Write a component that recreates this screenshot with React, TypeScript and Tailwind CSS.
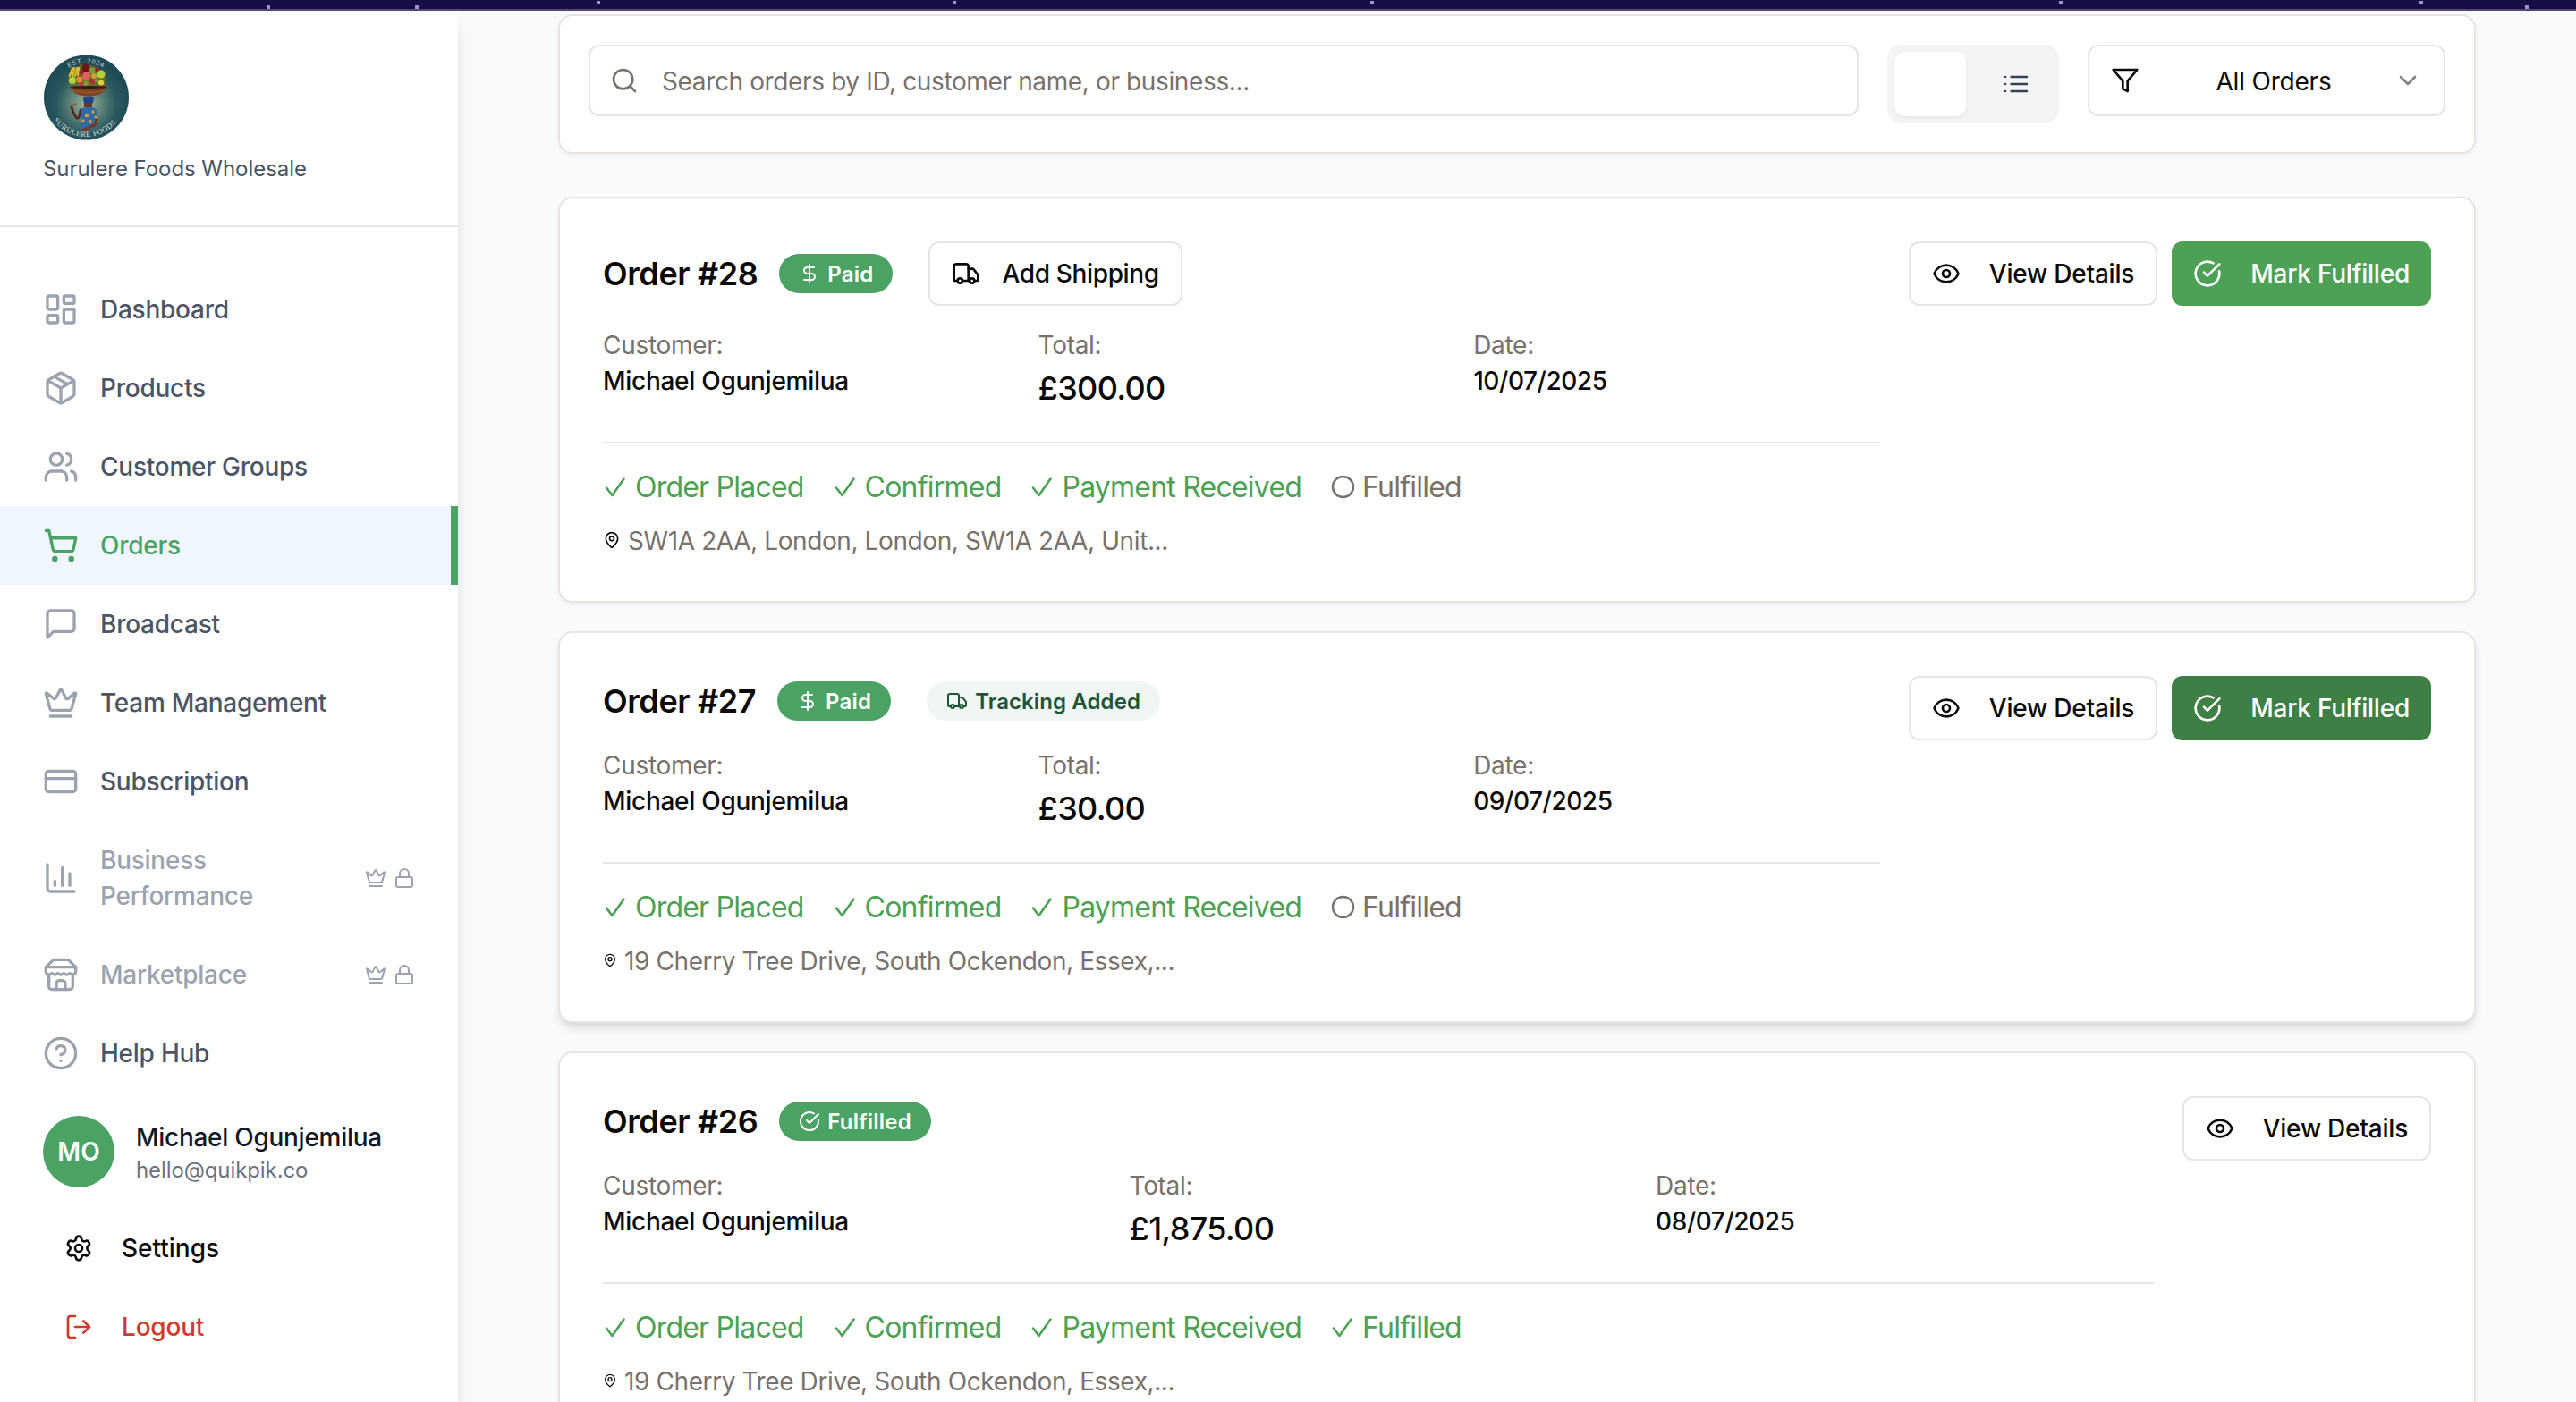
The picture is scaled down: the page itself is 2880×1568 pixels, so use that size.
import React from "react";
import {
  LayoutDashboard,
  Package,
  Users,
  ShoppingCart,
  Crown,
  CreditCard,
  ChartColumn,
  Lock,
  CircleHelp,
  Settings,
  Search,
  ChevronDown,
  DollarSign,
  Truck,
  Eye,
  CircleCheckBig,
  MapPin,
} from "lucide-react";

type IconProps = { className?: string };

const stroke = {
  viewBox: "0 0 24 24",
  fill: "none",
  stroke: "currentColor",
  strokeWidth: 2,
  strokeLinecap: "round" as const,
  strokeLinejoin: "round" as const,
};

const MessageIcon = ({ className }: IconProps) => (
  <svg {...stroke} className={className}>
    <path d="M21 15a2 2 0 0 1-2 2H7l-4 4V5a2 2 0 0 1 2-2h14a2 2 0 0 1 2 2z" />
  </svg>
);

const ListIcon = ({ className }: IconProps) => (
  <svg {...stroke} className={className}>
    <path d="M3 6h.01M3 12h.01M3 18h.01M8 6h13M8 12h13M8 18h13" />
  </svg>
);

const FilterIcon = ({ className }: IconProps) => (
  <svg {...stroke} className={className}>
    <polygon points="22 3 2 3 10 12.46 10 19 14 21 14 12.46 22 3" />
  </svg>
);

const StoreIcon = ({ className }: IconProps) => (
  <svg {...stroke} className={className}>
    <path d="m2 7 4.410-4.410A2 2 0 0 1 7.830 2h8.340a2 2 0 0 1 1.420.590L22 7" />
    <path d="M4 12v8a2 2 0 0 0 2 2h12a2 2 0 0 0 2-2v-8" />
    <path d="M15 22v-4a2 2 0 0 0-2-2h-2a2 2 0 0 0-2 2v4" />
    <path d="M2 7h20" />
    <path d="M22 7v3a2 2 0 0 1-2 2a2.700 2.700 0 0 1-1.590-.630.700.700 0 0 0-.820 0A2.700 2.700 0 0 1 16 12a2.700 2.700 0 0 1-1.590-.630.700.700 0 0 0-.820 0A2.700 2.700 0 0 1 12 12a2.700 2.700 0 0 1-1.590-.630.700.700 0 0 0-.820 0A2.700 2.700 0 0 1 8 12a2.700 2.700 0 0 1-1.590-.630.700.700 0 0 0-.820 0A2.700 2.700 0 0 1 4 12a2 2 0 0 1-2-2V7" />
  </svg>
);

const LogOutIcon = ({ className }: IconProps) => (
  <svg {...stroke} className={className}>
    <path d="M9 21H5a2 2 0 0 1-2-2V5a2 2 0 0 1 2-2h4" />
    <polyline points="16 17 21 12 16 7" />
    <path d="M21 12H9" />
  </svg>
);

function Logo() {
  return (
    <svg viewBox="0 0 96 96" className="size-24">
      <defs>
        <radialGradient id="glow" cx="50%" cy="58%" r="50%">
          <stop offset="0" stopColor="#a3b596" />
          <stop offset="0.35" stopColor="#62857a" />
          <stop offset="0.7" stopColor="#2a5a60" />
          <stop offset="1" stopColor="#1f4b55" />
        </radialGradient>
        <path id="arcTop" d="M9.500 48a38.500 38.500 0 0 1 77 0" />
        <path id="arcBottom" d="M4 48a44 44 0 0 0 88 0" />
      </defs>
      <circle cx="48.500" cy="48" r="47.500" fill="url(#glow)" />
      <text fill="#c9d6d2" fontSize="8" fontFamily="Liberation Serif, serif" letterSpacing="0.800" textAnchor="middle">
        <textPath href="#arcTop" startOffset="50%">EST. 2024</textPath>
      </text>
      <text fill="#d5dedb" fontSize="8.500" fontFamily="Liberation Serif, serif" letterSpacing="0.500" textAnchor="middle">
        <textPath href="#arcBottom" startOffset="49%">SURULERE FOODS</textPath>
      </text>
      <path d="M29 34l-1-11 4-8 5-1 8-3 8 1 9 3 6 5 2 8-1 7z" fill="#6b6a22" />
      <path d="M30 24l3-9M33 25l2-10M36 24l2-9M39 23l1-8" stroke="#e2c22f" strokeWidth="2" strokeLinecap="round" />
      <circle cx="48" cy="15" r="4.500" fill="#6d1420" />
      <circle cx="55" cy="18" r="3.500" fill="#7f9a34" />
      <circle cx="61" cy="17" r="2.500" fill="#8c2430" />
      <circle cx="43" cy="20" r="2.500" fill="#9c2233" />
      <circle cx="65" cy="22" r="4.500" fill="#b5cf3c" />
      <circle cx="57" cy="24" r="3" fill="#c9a532" />
      <circle cx="48.500" cy="24" r="4.500" fill="#e0605c" />
      <circle cx="33" cy="29" r="4" fill="#b4cf45" />
      <circle cx="41" cy="28" r="3.500" fill="#e58a3c" />
      <circle cx="55" cy="30" r="3" fill="#b02b3c" />
      <circle cx="60" cy="29" r="2.500" fill="#6a9a32" />
      <circle cx="65" cy="31.500" r="3" fill="#e0cf45" />
      <circle cx="48" cy="32" r="2.800" fill="#7d9f2d" />
      <circle cx="43" cy="33" r="2.200" fill="#c8313f" />
      <path d="M30.500 36h41c-2 6.500-9 10.500-20.500 10.500S32.500 42.500 30.500 36z" fill="#7d4322" />
      <path d="M33 40c8 3 28 3 36 0" stroke="#9c5c33" strokeWidth="1" fill="none" />
      <ellipse cx="51" cy="36.500" rx="20.500" ry="1.600" fill="#3d1c10" />
      <path d="M45 49c2-3 9-3 12-1l-1 6-4 3-6-2z" fill="#1c4486" />
      <path d="M46 54l6 1 3-1v7h-5l-4-2z" fill="#6b3420" />
      <path d="M42 61c5-3 12-3 18 0l1 11-3 4-1 7H43l-1-9z" fill="#2c6aa8" />
      <path d="M42 62c-1 7-2 10-4 9s-4-6-6-12" stroke="#5b2418" strokeWidth="2.600" strokeLinecap="round" fill="none" />
      <path d="M30 58l7-3" stroke="#8a4a24" strokeWidth="1.300" strokeLinecap="round" />
      <path d="M60 73l-2 6-14 6" stroke="#7a3822" strokeWidth="3.200" strokeLinecap="round" fill="none" />
      <circle cx="49" cy="68" r="2.200" fill="#e39a2d" />
      <circle cx="56" cy="64" r="1.700" fill="#e39a2d" />
      <circle cx="45" cy="74" r="1.700" fill="#e39a2d" />
      <circle cx="53" cy="75" r="1.900" fill="#e39a2d" />
      <circle cx="59" cy="70" r="1.500" fill="#e39a2d" />
    </svg>
  );
}

type NavItem = {
  label: string;
  icon: React.ComponentType<IconProps>;
  active?: boolean;
  locked?: boolean;
};

const navItems: NavItem[] = [
  { label: "Dashboard", icon: LayoutDashboard },
  { label: "Products", icon: Package },
  { label: "Customer Groups", icon: Users },
  { label: "Orders", icon: ShoppingCart, active: true },
  { label: "Broadcast", icon: MessageIcon },
  { label: "Team Management", icon: Crown },
  { label: "Subscription", icon: CreditCard },
  { label: "Business Performance", icon: ChartColumn, locked: true },
  { label: "Marketplace", icon: StoreIcon, locked: true },
  { label: "Help Hub", icon: CircleHelp },
];

function NavRow({ item }: { item: NavItem }) {
  const Icon = item.icon;
  const tone = item.active
    ? "bg-[#eff6ff] text-[#4aa264] border-r-8 border-[#4aa264] pr-10"
    : item.locked
      ? "text-[#9ca3af] pr-12"
      : "text-[#4b5563] pr-12";
  return (
    <a className={`flex items-center gap-6 py-6 pl-12 text-[28px] leading-10 font-medium tracking-[-0.25px] ${tone}`}>
      <Icon className={`size-10 shrink-0 ${item.active ? "" : "text-[#9ca3af]"}`} />
      <span className="w-[260px]">{item.label}</span>
      {item.locked && (
        <span className="ml-auto flex gap-2">
          <Crown className="size-6" />
          <Lock className="size-6" />
        </span>
      )}
    </a>
  );
}

function Sidebar() {
  return (
    <aside className="relative z-10 flex w-[512px] shrink-0 flex-col bg-white shadow-[0_20px_30px_-6px_rgba(0,0,0,0.1),0_8px_12px_-4px_rgba(0,0,0,0.1)]">
      <div className="flex h-[242px] flex-col border-b-2 border-[#e5e7eb] px-12 pt-[49px]">
        <Logo />
        <p className="mt-4 text-2xl leading-8 tracking-[-0.05px] text-[#4b5563]">Surulere Foods Wholesale</p>
      </div>
      <nav className="flex flex-col pt-12">
        {navItems.map((item) => (
          <NavRow key={item.label} item={item} />
        ))}
      </nav>
      <div className="flex items-center gap-6 px-12 pt-[26px]">
        <div className="flex size-20 items-center justify-center rounded-full bg-[#4aa264] text-[28px] font-semibold text-white">MO</div>
        <div>
          <p className="text-[28px] leading-10 font-medium tracking-[-0.28px] text-[#111827]">Michael Ogunjemilua</p>
          <p className="translate-y-px text-2xl leading-8 tracking-[-0.1px] text-[#6b7280]">hello@quikpik.co</p>
        </div>
      </div>
      <div className="flex flex-col gap-4 pt-8 pl-[72px] text-[28px] font-medium">
        <div className="flex h-[72px] items-center gap-8 text-[#0c0a09]">
          <Settings className="size-8" />
          Settings
        </div>
        <div className="flex h-[72px] items-center gap-8 tracking-[-0.2px] text-[#d03a2c]">
          <LogOutIcon className="size-8" />
          Logout
        </div>
      </div>
    </aside>
  );
}

function Toolbar() {
  return (
    <div className="flex h-[156px] shrink-0 items-start gap-8 rounded-2xl border-2 border-[#e7e5e4] bg-white p-8 shadow-[0_2px_4px_rgba(0,0,0,0.05)]">
      <div className="flex h-20 flex-1 items-center gap-[26px] rounded-xl border-2 border-[#e5e5e5] px-[22px] text-[28px] text-[#78716c]">
        <Search className="size-8" />
        <span className="translate-y-px tracking-[-0.37px]">Search orders by ID, customer name, or business...</span>
      </div>
      <div className="flex h-[88px] gap-4 rounded-2xl bg-[#f3f4f6] p-2">
        <div className="h-[72px] w-20 rounded-xl bg-white shadow-[0_2px_4px_rgba(0,0,0,0.05)]" />
        <div className="flex h-[72px] w-20 items-center justify-center text-[#374151]">
          <ListIcon className="size-8" />
        </div>
      </div>
      <div className="flex h-20 w-[400px] items-center justify-between rounded-xl border-2 border-[#e5e5e5] px-6 text-[28px] text-[#0c0a09]">
        <FilterIcon className="size-8" />
        <span className="ml-4 translate-y-px tracking-[-0.2px]">All Orders</span>
        <ChevronDown className="size-8 opacity-50" />
      </div>
    </div>
  );
}

const CheckMark = () => (
  <svg viewBox="0 0 32 32" className="size-8 shrink-0" fill="none" stroke="currentColor" strokeWidth="2.600" strokeLinecap="round" strokeLinejoin="round">
    <path d="M4 17.500l6.500 8.500L23.500 7.500" />
  </svg>
);

const OpenCircle = () => (
  <svg viewBox="0 0 32 32" className="size-8 shrink-0" fill="none" stroke="currentColor" strokeWidth="2.500">
    <circle cx="14.500" cy="16.500" r="11.500" />
  </svg>
);

type Order = {
  id: number;
  total: string;
  date: string;
  address: string;
  pin: string;
  fulfilled?: boolean;
  extra?: "shipping" | "tracking";
  cardShadow: string;
  markColor?: string;
};

const orders: Order[] = [
  {
    id: 28,
    total: "£300.00",
    date: "10/07/2025",
    address: "SW1A 2AA, London, London, SW1A 2AA, Unit...",
    pin: "size-5",
    extra: "shipping",
    cardShadow: "shadow-[0_2px_4px_rgba(0,0,0,0.05)]",
    markColor: "bg-[#4ca154]",
  },
  {
    id: 27,
    total: "£30.00",
    date: "09/07/2025",
    address: "19 Cherry Tree Drive, South Ockendon, Essex,...",
    pin: "size-4",
    extra: "tracking",
    cardShadow: "shadow-[0_8px_12px_-2px_rgba(0,0,0,0.1),0_4px_8px_-4px_rgba(0,0,0,0.1)]",
    markColor: "bg-[#3d7f45]",
  },
  {
    id: 26,
    total: "£1,875.00",
    date: "08/07/2025",
    address: "19 Cherry Tree Drive, South Ockendon, Essex,...",
    pin: "size-4",
    fulfilled: true,
    cardShadow: "shadow-[0_2px_4px_rgba(0,0,0,0.05)]",
  },
];

function Step({ label, done = true }: { label: string; done?: boolean }) {
  return (
    <span className={`flex items-center gap-1 ${done ? "text-[#4ca154]" : "text-[#78716c]"}`}>
      {done ? <CheckMark /> : <OpenCircle />}
      <span className="translate-y-px">{label}</span>
    </span>
  );
}

function OrderCard({ order }: { order: Order }) {
  return (
    <article className={`flex shrink-0 items-start gap-8 rounded-2xl border-2 border-[#e7e5e4] bg-white p-12 ${order.cardShadow}`}>
      <div className="flex-1 text-[28px] leading-10">
        <header className="mb-6 flex items-center">
          <h3 className="text-[36px] leading-[56px] font-semibold tracking-[-0.4px] text-[#0c0a09]">Order #{order.id}</h3>
          <span className="ml-6 flex h-11 items-center gap-2 rounded-full bg-[#4aa264] px-[22px] text-2xl font-semibold tracking-[0.2px] text-white">
            {order.fulfilled ? <CircleCheckBig className="size-6" /> : <DollarSign className="size-6" />}
            <span className="translate-y-px">{order.fulfilled ? "Fulfilled" : "Paid"}</span>
          </span>
          {order.extra === "shipping" && (
            <button className="ml-10 flex h-[72px] items-center gap-6 rounded-xl border-2 border-[#e5e5e5] px-6 font-medium tracking-[-0.35px] text-[#0c0a09]">
              <Truck className="size-8" />
              Add Shipping
            </button>
          )}
          {order.extra === "tracking" && (
            <span className="ml-10 flex h-11 items-center gap-2 rounded-full bg-[#eff6f4] px-[22px] text-2xl font-semibold tracking-[0.1px] text-[#1f5534]">
              <Truck className="size-6" />
              <span className="translate-y-px">Tracking Added</span>
            </span>
          )}
        </header>
        <div className="grid grid-cols-3 gap-8">
          <div>
            <p className="tracking-[-0.3px] text-[#78716c]">Customer:</p>
            <p className="font-medium tracking-[-0.28px] text-[#0c0a09]">Michael Ogunjemilua</p>
          </div>
          <div>
            <p className="tracking-[-0.3px] text-[#78716c]">Total:</p>
            <p className="text-[36px] leading-[56px] font-medium tracking-[-0.7px] text-[#0c0a09]">{order.total}</p>
          </div>
          <div>
            <p className="tracking-[-0.3px] text-[#78716c]">Date:</p>
            <p className="font-medium tracking-[-0.45px] text-[#0c0a09]">{order.date}</p>
          </div>
        </div>
        <div className="mt-8 flex gap-8 border-t-2 border-[#e5e5e5] pt-6 text-[32px] leading-[48px] tracking-[-0.78px]">
          <Step label="Order Placed" />
          <Step label="Confirmed" />
          <Step label="Payment Received" />
          <Step label="Fulfilled" done={!!order.fulfilled} />
        </div>
        <div className="mt-4 flex items-center gap-2">
          <MapPin className={`${order.pin} shrink-0 text-[#0c0a09]`} />
          <span className="translate-y-px tracking-[-0.4px] text-[#78716c]">{order.address}</span>
        </div>
      </div>
      <div className="flex gap-4 text-[28px] font-medium tracking-[-0.22px]">
        <button className="flex h-[72px] items-center gap-8 rounded-xl border-2 border-[#e5e5e5] px-6 text-[#0c0a09]">
          <Eye className="size-8" />
          View Details
        </button>
        {order.markColor && (
          <button className={`flex h-[72px] items-center gap-8 rounded-xl px-6 text-white ${order.markColor}`}>
            <CircleCheckBig className="size-8" />
            Mark Fulfilled
          </button>
        )}
      </div>
    </article>
  );
}

const stars = [300, 466, 669, 1067, 1534, 2304, 2707, 2825];

function StarStrip() {
  return (
    <div className="h-3 shrink-0 border-b-2 border-[#55467a] bg-[#170d45]">
      <svg width="2880" height="10" className="block">
        {stars.map((x, i) => (
          <rect key={x} x={x - 2} y={i < 2 || i === 7 ? 6 : 1} width="4" height="4" fill="#9a94cf" />
        ))}
      </svg>
    </div>
  );
}

export default function App() {
  return (
    <div className="flex h-[1568px] w-[2880px] flex-col overflow-hidden bg-[#f9fafc] font-['Inter',sans-serif]">
      <StarStrip />
      <div className="flex min-h-0 flex-1">
        <Sidebar />
        <main className="flex flex-1 flex-col gap-8 overflow-hidden pt-1 pr-28 pl-28">
          <div className="mb-4 flex flex-col">
            <Toolbar />
          </div>
          {orders.map((order) => (
            <OrderCard key={order.id} order={order} />
          ))}
        </main>
      </div>
    </div>
  );
}
